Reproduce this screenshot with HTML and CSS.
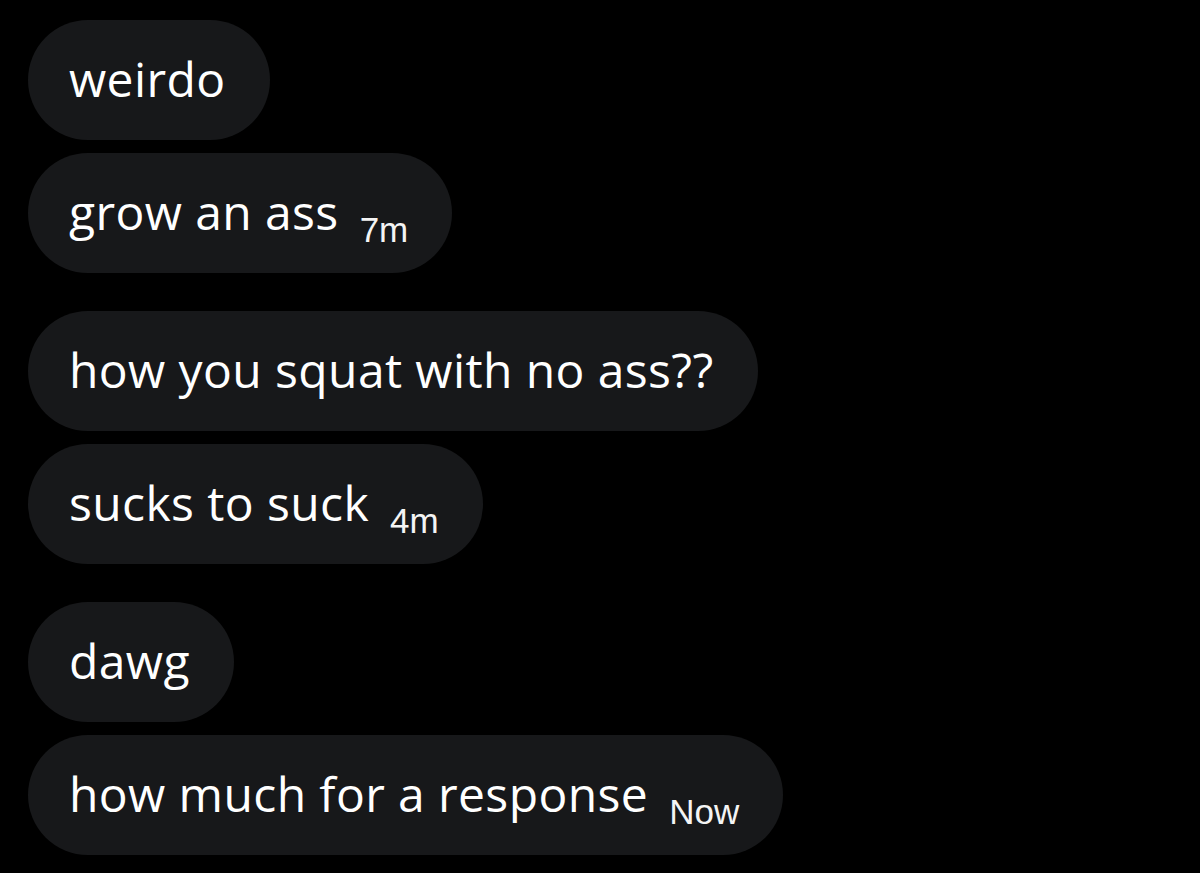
FILE: index.html
```html
<!DOCTYPE html>
<html lang="en">
<head>
<meta charset="utf-8">
<title>Messages</title>
<link rel="stylesheet" href="styles.css">
</head>
<body>
<main class="thread">
  <section class="group">
    <div class="bubble"><span class="msg">weirdo</span></div>
    <div class="bubble"><span class="msg">grow an ass</span><span class="time">7m</span></div>
  </section>
  <section class="group">
    <div class="bubble"><span class="msg">how you squat with no ass??</span></div>
    <div class="bubble"><span class="msg">sucks to suck</span><span class="time">4m</span></div>
  </section>
  <section class="group">
    <div class="bubble"><span class="msg">dawg</span></div>
    <div class="bubble"><span class="msg">how much for a response</span><span class="time">Now</span></div>
  </section>
</main>
</body>
</html>
```

FILE: styles.css
```css
html, body {
  margin: 0;
  padding: 0;
  background: #000;
}

body {
  width: 1200px;
  height: 873px;
  overflow: hidden;
  font-family: "Open Sans", "Liberation Sans", sans-serif;
  color: #fff;
}

.thread {
  display: flex;
  flex-direction: column;
  gap: 38px;
  padding: 20px 0 0 28px;
}

.group {
  display: flex;
  flex-direction: column;
  align-items: flex-start;
  gap: 13px;
}

.bubble {
  height: 120px;
  box-sizing: border-box;
  padding: 0 44px 0 41px;
  border-radius: 60px;
  background: #17181a;
  line-height: 117px;
  white-space: nowrap;
}

.msg {
  font-size: 48px;
  letter-spacing: 0.4px;
}

.time {
  font-family: "Liberation Sans", Arial, sans-serif;
  font-size: 35px;
  margin-left: 21px;
  vertical-align: -12px;
  color: #f4f4f4;
}
```
